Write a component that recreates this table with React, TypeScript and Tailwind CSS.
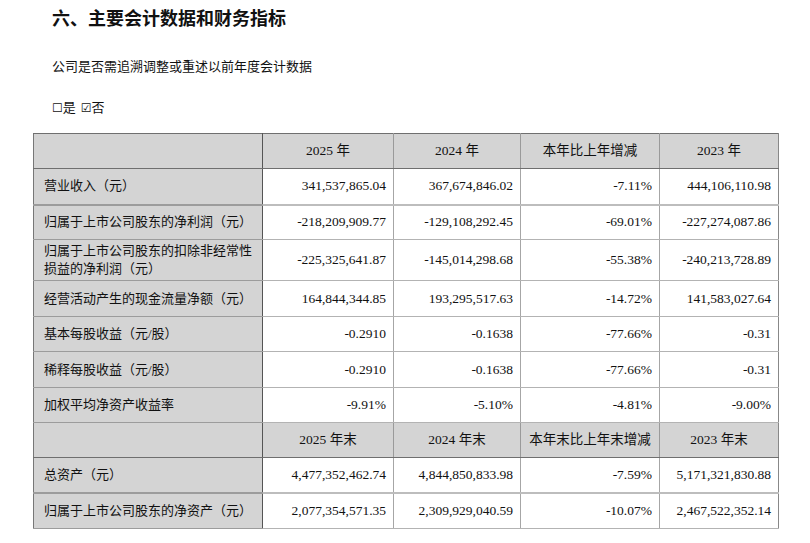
const serif = {
  fontFamily: '"Liberation Serif", "Noto Sans CJK SC", serif',
};

type Row = {
  label: React.ReactNode;
  values: string[];
  h: string;
  thick?: boolean;
};

const topRows: Row[] = [
  { label: "营业收入（元）", values: ["341,537,865.04", "367,674,846.02", "-7.11%", "444,106,110.98"], h: "h-[36px]", thick: true },
  { label: "归属于上市公司股东的净利润（元）", values: ["-218,209,909.77", "-129,108,292.45", "-69.01%", "-227,274,087.86"], h: "h-[35px]" },
  {
    label: (
      <>
        归属于上市公司股东的扣除非经常性
        <br />
        损益的净利润（元）
      </>
    ),
    values: ["-225,325,641.87", "-145,014,298.68", "-55.38%", "-240,213,728.89"],
    h: "h-[41px]",
  },
  { label: "经营活动产生的现金流量净额（元）", values: ["164,844,344.85", "193,295,517.63", "-14.72%", "141,583,027.64"], h: "h-[36px]" },
  { label: "基本每股收益（元/股）", values: ["-0.2910", "-0.1638", "-77.66%", "-0.31"], h: "h-[35px]" },
  { label: "稀释每股收益（元/股）", values: ["-0.2910", "-0.1638", "-77.66%", "-0.31"], h: "h-[36px]" },
  { label: "加权平均净资产收益率", values: ["-9.91%", "-5.10%", "-4.81%", "-9.00%"], h: "h-[35px]" },
];

const bottomRows: Row[] = [
  { label: "总资产（元）", values: ["4,477,352,462.74", "4,844,850,833.98", "-7.59%", "5,171,321,830.88"], h: "h-[35px]", thick: true },
  { label: "归属于上市公司股东的净资产（元）", values: ["2,077,354,571.35", "2,309,929,040.59", "-10.07%", "2,467,522,352.14"], h: "h-[36px]" },
];

function HeaderRow({ cols, h }: { cols: string[]; h: string }) {
  return (
    <tr className={`${h} bg-[#d4d4d4]`}>
      <td className="border-y border-y-[#6f6f6f] border-l border-l-[#777] border-r border-r-[#555]" />
      {cols.map((c, i) => (
        <td
          key={c}
          className={`border-y border-y-[#6f6f6f] text-center text-[13.5px] leading-[18px] text-[#111] ${
            i === cols.length - 1 ? "border-r border-r-[#888]" : "border-r border-r-[#9a9a9a]"
          }`}
        >
          {c}
        </td>
      ))}
    </tr>
  );
}

function DataRow({ row }: { row: Row }) {
  const bottom = row.thick
    ? "border-b-2 border-b-[#bdbdbd]"
    : "border-b border-b-[#b3b3b3]";
  return (
    <tr className={row.h}>
      <td
        className={`bg-[#d4d4d4] border-l border-l-[#777] border-r border-r-[#555] ${
          row.thick ? "border-b-2 border-b-[#9c9c9c]" : "border-b border-b-[#9c9c9c]"
        } pl-[10px] pr-[4px] text-left text-[13px] leading-[18px] text-[#111]`}
      >
        {row.label}
      </td>
      {row.values.map((v, i) => (
        <td
          key={i}
          className={`${bottom} pr-[7px] text-right text-[13.5px] leading-[18px] text-[#111] ${
            i === 3 ? "border-r border-r-[#888]" : "border-r border-r-[#a6a6a6]"
          }`}
        >
          {v}
        </td>
      ))}
    </tr>
  );
}

export default function App() {
  return (
    <div className="h-[543px] w-[810px] overflow-hidden bg-white text-black" style={serif}>
      <div className="pl-[52px] pt-[5px]">
        <h1
          className="text-[18px] font-bold leading-[24px] text-[#111]"
          style={{ fontFamily: '"Noto Sans CJK SC", sans-serif' }}
        >
          六、主要会计数据和财务指标
        </h1>
        <p className="mt-[28px] text-[13px] leading-[20px] text-[#111]">
          公司是否需追溯调整或重述以前年度会计数据
        </p>
        <p className="mt-[21px] flex items-center text-[13px] leading-[20px] text-[#111]">
          <span style={{ fontFamily: '"DejaVu Sans", sans-serif' }} className="text-[12px]">
            ☐
          </span>
          <span>是</span>
          <span className="ml-[5px] text-[12px]" style={{ fontFamily: '"DejaVu Sans", sans-serif' }}>
            ☑
          </span>
          <span>否</span>
        </p>
      </div>
      <div className="mt-[15px] pl-[33px]">
        <table className="w-[745px] table-fixed border-collapse">
          <colgroup>
            <col className="w-[229px]" />
            <col className="w-[131px]" />
            <col className="w-[127px]" />
            <col className="w-[139px]" />
            <col className="w-[119px]" />
          </colgroup>
          <tbody>
            <HeaderRow cols={["2025 年", "2024 年", "本年比上年增减", "2023 年"]} h="h-[35px]" />
            {topRows.map((r, i) => (
              <DataRow key={i} row={r} />
            ))}
            <HeaderRow cols={["2025 年末", "2024 年末", "本年末比上年末增减", "2023 年末"]} h="h-[35px]" />
            {bottomRows.map((r, i) => (
              <DataRow key={i} row={r} />
            ))}
          </tbody>
        </table>
      </div>
    </div>
  );
}
